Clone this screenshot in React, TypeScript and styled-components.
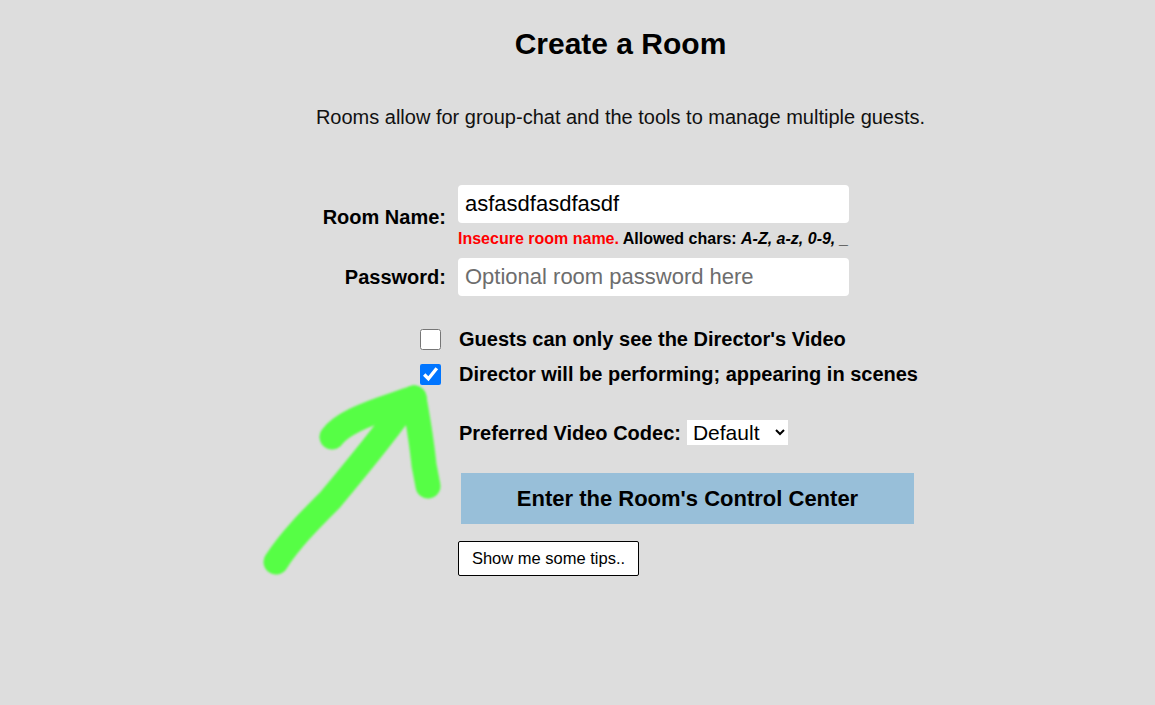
import React from "react";
import styled, { createGlobalStyle } from "styled-components";

const Global = createGlobalStyle`
  html, body { margin: 0; padding: 0; background: #dddddd; }
  body { font-family: "Liberation Sans", Arial, sans-serif; color: #000; }
`;

const Page = styled.div`
  position: relative;
  width: 1155px;
  height: 705px;
  overflow: hidden;
  background: #dddddd;
`;

const Header = styled.div`
  display: flex;
  flex-direction: column;
  align-items: center;
  padding-left: 86px;
  padding-top: 26px;
`;

const Title = styled.h1`
  margin: 0;
  font-size: 30px;
  font-weight: 700;
  line-height: 36px;
`;

const Subtitle = styled.p`
  margin: 43px 0 0 0;
  font-size: 20px;
  line-height: 24px;
  color: #111;
`;

const Form = styled.div`
  margin: 56px 0 0 300px;
  display: grid;
  grid-template-columns: 146px 391px;
  column-gap: 12px;
  align-items: center;
`;

const Label = styled.label`
  justify-self: end;
  font-size: 20px;
  font-weight: 700;
  line-height: 24px;
`;

const Field = styled.div`
  display: flex;
  flex-direction: column;
`;

const TextInput = styled.input`
  box-sizing: border-box;
  width: 391px;
  height: 38px;
  border: none;
  border-radius: 4px;
  background: #fff;
  padding: 0 7px;
  font-family: "Liberation Sans", Arial, sans-serif;
  font-size: 22px;
  color: #000;
  outline: none;
  &::placeholder { color: #6d6d6d; }
`;

const Hint = styled.div`
  margin-top: 7px;
  font-size: 16px;
  font-weight: 700;
  white-space: nowrap;
  line-height: 18px;
`;

const Red = styled.span`
  color: #ff0000;
`;

const Em = styled.i``;

const RowGap = styled.div<{ $h: number }>`
  grid-column: 1 / span 2;
  height: ${(p) => p.$h}px;
`;

const Check = styled.input`
  justify-self: end;
  margin: 0 5px 0 0;
  width: 21px;
  height: 21px;
  accent-color: #0075ff;
`;

const CheckLabel = styled.span`
  font-size: 20px;
  font-weight: 700;
  line-height: 24px;
  white-space: nowrap;
  padding-left: 1px;
`;

const CodecRow = styled.div`
  display: flex;
  align-items: center;
  gap: 6px;
  white-space: nowrap;
`;

const Select = styled.select`
  height: 25px;
  border: none;
  background: #fff;
  font-family: "Liberation Sans", Arial, sans-serif;
  font-size: 21px;
  padding: 0 2px;
  width: 101px;
`;

const PrimaryButton = styled.button`
  margin-left: 3px;
  width: 453px;
  height: 51px;
  border: none;
  background: #98bfd9;
  font-family: "Liberation Sans", Arial, sans-serif;
  font-size: 22px;
  font-weight: 700;
  color: #000;
`;

const TipsButton = styled.button`
  justify-self: start;
  width: 181px;
  height: 35px;
  border: 1px solid #000;
  border-radius: 2px;
  background: #fff;
  font-family: "Liberation Sans", Arial, sans-serif;
  font-size: 16.5px;
  color: #000;
`;

const Arrow = styled.svg`
  position: absolute;
  left: 0;
  top: 0;
  pointer-events: none;
`;

export default function App() {
  return (
    <Page>
      <Global />
      <Header>
        <Title>Create a Room</Title>
        <Subtitle>Rooms allow for group-chat and the tools to manage multiple guests.</Subtitle>
      </Header>
      <Form>
        <Label>Room Name:</Label>
        <Field>
          <TextInput defaultValue="asfasdfasdfasdf" />
          <Hint>
            <Red>Insecure room name.</Red> Allowed chars: <Em>A-Z, a-z, 0-9, _</Em>
          </Hint>
        </Field>
        <RowGap $h={10} />
        <Label>Password:</Label>
        <TextInput placeholder="Optional room password here" />
        <RowGap $h={31} />
        <Check type="checkbox" />
        <CheckLabel>Guests can only see the Director's Video</CheckLabel>
        <RowGap $h={11} />
        <Check type="checkbox" defaultChecked />
        <CheckLabel>Director will be performing; appearing in scenes</CheckLabel>
        <RowGap $h={34} />
        <span />
        <CodecRow>
          <CheckLabel>Preferred Video Codec:</CheckLabel>
          <Select defaultValue="default">
            <option value="default">Default</option>
          </Select>
        </CodecRow>
        <RowGap $h={28} />
        <span />
        <PrimaryButton>Enter the Room's Control Center</PrimaryButton>
        <RowGap $h={17} />
        <span />
        <TipsButton>Show me some tips..</TipsButton>
      </Form>
      <Arrow width="1155" height="705" viewBox="0 0 1155 705">
        <defs>
          <filter id="soft" x="-10%" y="-10%" width="120%" height="120%">
            <feGaussianBlur stdDeviation="1.2" />
          </filter>
        </defs>
        <g
          fill="none"
          stroke="#57fe45"
          strokeWidth="25"
          strokeLinecap="round"
          strokeLinejoin="round"
          filter="url(#soft)"
        >
          <path d="M276 562 C 290 540, 310 520, 330 500 C 355 470, 380 440, 400 412 L 414 398" />
          <path d="M414 398 C 418 420, 422 445, 424 465 L 428 486" />
          <path d="M414 398 C 395 405, 375 410, 355 420 C 345 425, 337 430, 332 437" />
        </g>
      </Arrow>
    </Page>
  );
}
